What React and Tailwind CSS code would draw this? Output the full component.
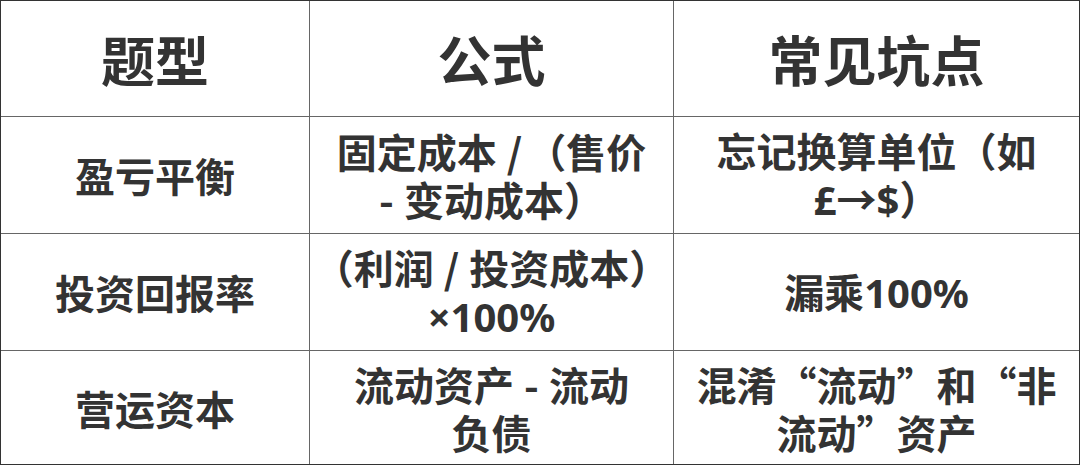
import React from 'react'

const font = { fontFamily: '"Noto Sans CJK SC", "Noto Sans", sans-serif' }

const Lat = ({ children }) => (
  <span style={{ fontFamily: '"Noto Sans", "Noto Sans CJK SC", sans-serif' }}>{children}</span>
)

const Slash = () => <span className="px-[10px]">/</span>

const rows = [
  [
    ['盈亏平衡'],
    [<>固定成本<span className="pl-[10px] pr-[4px]">/</span>（售价</>, <><span className="pr-[10px]">-</span>变动成本）</>],
    ['忘记换算单位（如', <><Lat>£→$</Lat>）</>],
  ],
  [
    ['投资回报率'],
    [<>（利润<Slash />投资成本）</>, <Lat>×100%</Lat>],
    [<>漏乘<Lat>100%</Lat></>],
  ],
  [
    ['营运资本'],
    [<>流动资产<span className="px-[10px]">-</span>流动</>, '负债'],
    ['混淆“流动”和“非', '流动”资产'],
  ],
]

const heights = ['h-[117px]', 'h-[117px]', 'h-[113px]']

const App = () => {
  return (
    <div className="w-[1080px] h-[465px] bg-white">
      <div
        className="w-[1080px] h-[465px] border border-[#333] grid grid-cols-[309px_364px_1fr] text-[#333] font-bold"
        style={font}
        lang="zh-CN"
      >
        {['题型', '公式', '常见坑点'].map((h, i) => (
          <div
            key={h}
            className={
              'h-[116px] flex items-center justify-center border-b border-[#666] text-[54px] leading-none ' +
              (i < 2 ? 'border-r' : '')
            }
          >
            {h}
          </div>
        ))}
        {rows.map((row, r) =>
          row.map((cell, c) => (
            <div
              key={r + '-' + c}
              className={
                heights[r] +
                ' flex flex-col items-center justify-center text-center text-[40px] leading-[48px] border-[#666] ' +
                (c < 2 ? 'border-r ' : '') +
                (r < 2 ? 'border-b' : '')
              }
            >
              {cell.map((line, k) => (
                <span key={k} className="whitespace-nowrap">{line}</span>
              ))}
            </div>
          ))
        )}
      </div>
    </div>
  )
}

export default App
